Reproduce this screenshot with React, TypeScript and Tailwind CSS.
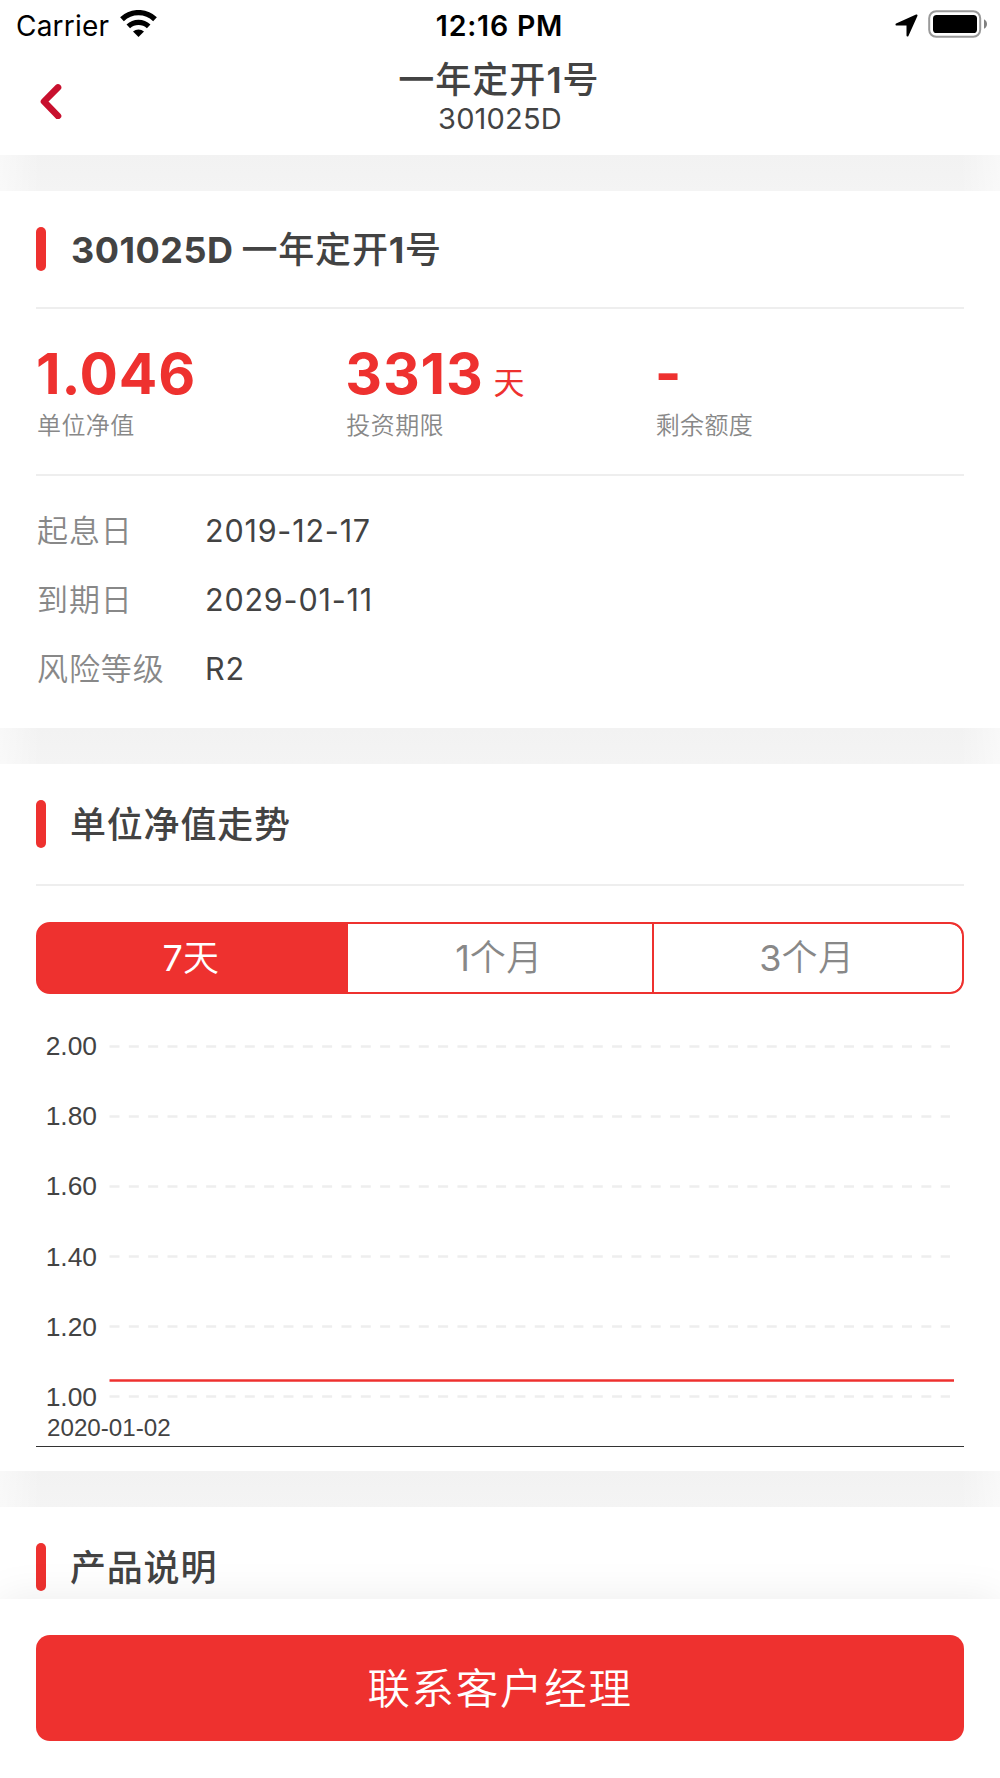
import { useState } from "react";
import clsx from "clsx";

const stats = [
  { value: "1.046", unit: "", label: "单位净值" },
  { value: "3313", unit: "天", label: "投资期限" },
  { value: "-", unit: "", label: "剩余额度" },
];

const details = [
  { label: "起息日", value: "2019-12-17" },
  { label: "到期日", value: "2029-01-11" },
  { label: "风险等级", value: "R2" },
];

const ranges = [
  { count: 7, unit: "天" },
  { count: 1, unit: "个月" },
  { count: 3, unit: "个月" },
];

const ticks = ["2.00", "1.80", "1.60", "1.40", "1.20", "1.00"];

function StatusBar() {
  return (
    <div className="flex h-[50px] items-center justify-between pl-4 pr-[13px] text-black">
      <div className="flex w-1/3 items-center gap-[11px]">
        <span className="pt-px text-[28px] leading-[50px] tracking-[0.2px]">Carrier</span>
        <svg className="-mt-[3px] h-[27px] w-[37px]" viewBox="0 0 37 27" fill="none" stroke="currentColor">
          <path d="M2 9.2a24 24 0 0 1 33 0" strokeWidth="5.4" />
          <path d="M8.3 16.4a15 15 0 0 1 20.4 0" strokeWidth="5.2" />
          <path d="M13 21.6a8.2 8.2 0 0 1 11 0L18.5 27z" fill="currentColor" stroke="none" />
        </svg>
      </div>
      <span className="pr-1 pt-px text-[28.5px] font-semibold leading-[50px] tracking-[0.8px]">12:16 PM</span>
      <div className="flex w-1/3 items-center justify-end gap-2.5">
        <svg className="h-[23px] w-[23px]" viewBox="0 0 23 23">
          <path
            d="M21.5 1.5 1.5 10.5H12.5V21.5z"
            fill="currentColor"
            stroke="currentColor"
            strokeWidth="2"
            strokeLinejoin="round"
          />
        </svg>
        <svg className="-mt-0.5 h-7 w-[59px]" viewBox="0 0 59 28">
          <rect x="1.2" y="1.2" width="51" height="25.6" rx="7" fill="none" stroke="#999" strokeWidth="2" />
          <rect x="5" y="5" width="44" height="18" rx="3.6" fill="currentColor" />
          <path d="M56 9.2c4 2 4 7.6 0 9.6z" fill="#808080" />
        </svg>
      </div>
    </div>
  );
}

function Header() {
  return (
    <header className="h-[155px] bg-white">
      <StatusBar />
      <div className="flex h-[105px]">
        <button className="flex w-1/4 items-start pl-10 pt-[33px]" aria-label="返回">
          <svg className="h-9 w-[22px]" viewBox="0 0 22 36" fill="none">
            <path d="M18 4.4 4 18.5 18 33" stroke="#c8102e" strokeWidth="6.6" strokeLinecap="round" strokeLinejoin="round" />
          </svg>
        </button>
        <div className="flex w-1/2 flex-col items-center text-[#434343]">
          <h1 className="mt-2 pr-0.5 text-[36px] font-medium leading-[44px] tracking-[1px]">
            一年定开<span className="font-semibold">1</span>号
          </h1>
          <p className="text-[29px] leading-[34px] tracking-[0.2px]">301025D</p>
        </div>
      </div>
    </header>
  );
}

// Grey gap between cards, fading out at the screen edges
function Gap() {
  return (
    <div className="h-9 bg-linear-to-b from-[#f2f2f2] to-[#f4f4f4]">
      <div className="flex h-full justify-between">
        <div className="h-full w-10 bg-linear-to-r from-white/50 to-white/0" />
        <div className="h-full w-10 bg-linear-to-l from-white/50 to-white/0" />
      </div>
    </div>
  );
}

function CardTitle({ code, children, short }: { code?: string; children: React.ReactNode; short?: boolean }) {
  return (
    <div className="flex items-center pt-9">
      <span className={clsx("w-2.5 rounded-full bg-[#ee312f]", short ? "h-11" : "h-12")} />
      <h2
        className={clsx(
          "ml-6 text-[36px] font-medium leading-[42px] tracking-[0.8px] text-[#434343]",
          short ? "pt-px" : "pt-0.5"
        )}
      >
        {code && <span className="ml-px mr-2 font-bold tracking-[0.5px]">{code}</span>}
        {children}
      </h2>
    </div>
  );
}

function Summary() {
  return (
    <section className="h-[537px] bg-white px-9">
      <CardTitle code="301025D" short>
        一年定开<span className="font-bold">1</span>号
      </CardTitle>
      <div className="mt-9 grid h-[169px] grid-cols-3 border-y-2 border-[#eee]">
        {stats.map((s) => (
          <div key={s.label} className="flex flex-col pt-[30px]">
            <div className="flex items-baseline text-[#ee312f]">
              <span className="text-[57px] font-bold leading-[70px] tracking-[0.8px]">{s.value}</span>
              {s.unit && <span className="ml-2.5 text-[31px] leading-[40px]">{s.unit}</span>}
            </div>
            <span className="pl-px pt-px text-[24px] font-[350] leading-8 tracking-[0.4px] text-[#888]">{s.label}</span>
          </div>
        ))}
      </div>
      <dl className="pt-5">
        {details.map((d) => (
          <div key={d.label} className="flex h-[69px] items-center">
            <dt className="w-[169px] pl-px pt-0.5 text-[31px] font-[350] tracking-[0.9px] text-[#888]">{d.label}</dt>
            <dd className="text-[30.5px] tracking-[0.8px] text-[#434343]">{d.value}</dd>
          </div>
        ))}
      </dl>
    </section>
  );
}

function Chart() {
  return (
    <div className="mt-[17px] border-b border-[#333] font-['Liberation_Sans',sans-serif] text-[#434343]">
      <svg className="block h-[435px] w-[928px]" viewBox="0 0 928 435">
        {ticks.map((t, i) => (
          <g key={t}>
            <text x="61" y={44 + i * 70.2} textAnchor="end" fontSize="26.4" fill="currentColor">
              {t}
            </text>
            <line
              x1="73.5"
              x2="914"
              y1={35.5 + i * 70}
              y2={35.5 + i * 70}
              stroke="#eee"
              strokeWidth="2.6"
              strokeDasharray="10 9.33"
            />
          </g>
        ))}
        <line x1="73.5" x2="918" y1="369.5" y2="369.5" stroke="#ee312f" strokeWidth="2.6" />
        <text x="11" y="425" fontSize="24.2" fill="currentColor">
          2020-01-02
        </text>
      </svg>
    </div>
  );
}

function Trend() {
  const [active, setActive] = useState(0);

  return (
    <section className="h-[707px] bg-white px-9">
      <CardTitle>单位净值走势</CardTitle>
      <div className="mt-9 h-0.5 bg-[#eee]" />
      <div className="mt-9 grid h-[72px] grid-cols-[310px_304px_310px] overflow-hidden rounded-[14px] border-2 border-[#ee312f] bg-[#ee312f]">
        {ranges.map((r, i) => (
          <button
            key={r.count}
            onClick={() => setActive(i)}
            className={clsx(
              "text-[36px] font-[350] tracking-[0.5px]",
              i === active ? "bg-[#ee312f] pr-1 text-white" : "bg-white pr-0.5 text-[#888]",
              i > 1 && "rounded-r-xl border-l-2 border-[#ee312f]"
            )}
          >
            <span className="font-normal tracking-normal">{r.count}</span>
            {r.unit}
          </button>
        ))}
      </div>
      <Chart />
    </section>
  );
}

export default function App() {
  return (
    <div className="flex h-[1778px] w-[1000px] flex-col overflow-hidden bg-white font-['Inter','Noto_Sans_CJK_SC',sans-serif]">
      <Header />
      <Gap />
      <Summary />
      <Gap />
      <Trend />
      <Gap />
      <section className="h-[92px] bg-white px-9">
        <CardTitle>产品说明</CardTitle>
      </section>
      <footer className="relative h-[179px] bg-white px-9 pt-9 shadow-[0_0_40px_rgba(0,0,0,0.08)]">
        <button className="h-[106px] w-full rounded-[14px] bg-[#ee312f] pt-px text-[42.5px] font-[350] tracking-[1.7px] text-white">
          联系客户经理
        </button>
      </footer>
    </div>
  );
}
